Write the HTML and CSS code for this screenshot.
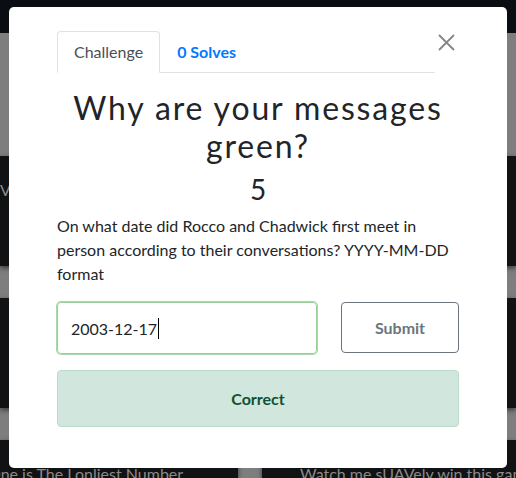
FILE: index.html
```html
<!DOCTYPE html>
<html lang="en">
<head>
<meta charset="utf-8">
<title>Challenge</title>
<link rel="stylesheet" href="styles.css">
</head>
<body>
<div class="page">
  <nav class="navbar"></nav>
  <header class="jumbo"></header>
  <main class="board">
    <div class="card card-left"><span class="card-title">Voice of the Void</span></div>
    <div class="card card-right"><span class="card-title">Hidden in Plain Sight</span></div>
    <div class="card card-left"></div>
    <div class="card card-right"></div>
    <div class="card card-left"><span class="card-title lonely">One is The Lonliest Number</span></div>
    <div class="card card-right"><span class="card-title">Watch me sUAVely win this game</span></div>
  </main>
</div>

<div class="modal">
  <div class="dialog">
    <div class="tabs-row">
      <ul class="tabs">
        <li class="tab tab-active">Challenge</li>
        <li class="tab tab-link">0 Solves</li>
      </ul>
      <button class="close" aria-label="Close">
        <svg width="17" height="17" viewBox="0 0 17 17"><path d="M1 1 L16 16 M16 1 L1 16" stroke="#858585" stroke-width="1.8" fill="none"/></svg>
      </button>
    </div>
    <h2 class="title">Why are your messages green?</h2>
    <h3 class="value">5</h3>
    <p class="desc">On what date did Rocco and Chadwick first meet in person according to their conversations? YYYY-MM-DD format</p>
    <div class="answer-row">
      <div class="answer" role="textbox">2003-12-17<span class="caret"></span></div>
      <button class="submit">Submit</button>
    </div>
    <div class="alert">Correct</div>
  </div>
</div>
</body>
</html>
```

FILE: styles.css
```css
html, body {
  margin: 0;
  padding: 0;
}

body {
  width: 516px;
  height: 478px;
  overflow: hidden;
  background: #7e7e7e;
  font-family: "Lato", "Noto Sans", sans-serif;
  color: #212529;
}

.page {
  display: flex;
  flex-direction: column;
}

.navbar {
  height: 33px;
  background: #0a0d12;
}

.jumbo {
  height: 123px;
}

.board {
  display: grid;
  grid-template-columns: 238px 1fr;
  grid-template-rows: 110px 110px 38px;
  column-gap: 24px;
  row-gap: 32px;
}

.card {
  background: #111214;
  box-shadow: 0 2px 5px rgba(0, 0, 0, 0.55);
  padding-top: 22px;
  white-space: nowrap;
  overflow: hidden;
  font-size: 16px;
  line-height: 24px;
}

.card-right {
  padding-left: 38px;
}

.card-title {
  color: #8a8a8a;
}

.lonely {
  display: inline-block;
  margin-left: -12px;
}

.modal {
  position: fixed;
  inset: 0;
}

.dialog {
  margin: 7px 9px 0;
  background: #fff;
  border-radius: 5px;
  padding: 24px 48px 41px;
}

.tabs-row {
  display: flex;
  align-items: flex-start;
}

.tabs {
  flex: 1;
  display: flex;
  list-style: none;
  margin: 0;
  padding: 0;
  border-bottom: 1px solid #dee2e6;
}

.tab {
  padding: 8px 16px;
  font-size: 16px;
  line-height: 24px;
  border: 1px solid transparent;
  border-radius: 4px 4px 0 0;
  margin-bottom: -1px;
}

.tab-active {
  color: #495057;
  border-color: #dee2e6 #dee2e6 #fff;
  background: #fff;
}

.tab-link {
  color: #007bff;
  font-weight: 700;
}

.close {
  width: 24px;
  margin: 3px 0 0;
  padding: 0 0 0 3px;
  border: 0;
  background: none;
  display: flex;
}

.title {
  margin: 16px 0 7px;
  font-size: 32px;
  line-height: 1.2;
  font-weight: 400;
  letter-spacing: 1.85px;
  text-align: center;
}

.value {
  margin: 0 0 8px;
  font-size: 28px;
  line-height: 1.2;
  font-weight: 400;
  text-align: center;
}

.desc {
  margin: 0 0 16px;
  font-size: 16px;
  line-height: 24px;
}

.answer-row {
  display: flex;
  align-items: flex-start;
  gap: 24px;
}

.answer {
  box-sizing: border-box;
  width: 260px;
  height: 52px;
  padding: 0 13px;
  border: 1px solid #98d09a;
  box-shadow: 0 0 0 1px #a9d9aa;
  border-radius: 4px;
  font-size: 16px;
  color: #212529;
  display: flex;
  align-items: center;
}

.caret {
  width: 1px;
  height: 21px;
  margin-left: 1px;
  background: #000;
}

.submit {
  box-sizing: border-box;
  width: 118px;
  height: 51px;
  border: 1px solid #6c757d;
  border-radius: 4px;
  background: #fff;
  color: #6c757d;
  font-family: "Lato", "Noto Sans", sans-serif;
  font-size: 16px;
  font-weight: 700;
}

.alert {
  margin-top: 16px;
  height: 57px;
  box-sizing: border-box;
  border: 1px solid #badbcc;
  border-radius: 4px;
  background: #d1e7dd;
  color: #0f5132;
  font-size: 16px;
  font-weight: 700;
  display: flex;
  align-items: center;
  justify-content: center;
}
```
